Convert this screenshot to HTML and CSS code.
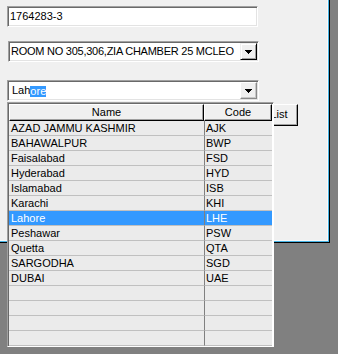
FILE: index.html
```
<!DOCTYPE html>
<html>
<head>
<meta charset="utf-8">
<link rel="stylesheet" href="styles.css">
</head>
<body>
<div class="window">
  <div class="textbox">1764283-3</div>
  <div class="combo combo-address">
    <span class="combo-text address-text">ROOM NO 305,306,ZIA CHAMBER 25 MCLEO</span>
    <span class="drop-btn"><svg width="7" height="4" viewBox="0 0 7 4" shape-rendering="crispEdges"><path d="M0 0h7v1h-1v1h-1v1h-1v1h-1v-1h-1v-1h-1v-1h-1z" fill="#000"/></svg></span>
  </div>
  <div class="combo combo-city">
    <span class="combo-text city-text">Lah<span class="sel">ore</span></span>
    <span class="drop-btn soft"><svg width="7" height="4" viewBox="0 0 7 4" shape-rendering="crispEdges"><path d="M0 0h7v1h-1v1h-1v1h-1v1h-1v-1h-1v-1h-1v-1h-1z" fill="#000"/></svg></span>
  </div>
  <div class="btn-list">List</div>
</div>

<div class="popup">
  <div class="head">
    <div class="hcell hname">Name</div>
    <div class="hcell hcode">Code</div>
  </div>
  <div class="row"><div class="cname">AZAD JAMMU KASHMIR</div><div class="ccode">AJK</div></div>
  <div class="row"><div class="cname">BAHAWALPUR</div><div class="ccode">BWP</div></div>
  <div class="row"><div class="cname">Faisalabad</div><div class="ccode">FSD</div></div>
  <div class="row"><div class="cname">Hyderabad</div><div class="ccode">HYD</div></div>
  <div class="row"><div class="cname">Islamabad</div><div class="ccode">ISB</div></div>
  <div class="row"><div class="cname">Karachi</div><div class="ccode">KHI</div></div>
  <div class="row selected"><div class="cname">Lahore</div><div class="ccode">LHE</div></div>
  <div class="row"><div class="cname">Peshawar</div><div class="ccode">PSW</div></div>
  <div class="row"><div class="cname">Quetta</div><div class="ccode">QTA</div></div>
  <div class="row"><div class="cname">SARGODHA</div><div class="ccode">SGD</div></div>
  <div class="row"><div class="cname">DUBAI</div><div class="ccode">UAE</div></div>
  <div class="row"><div class="cname"></div><div class="ccode"></div></div>
  <div class="row"><div class="cname"></div><div class="ccode"></div></div>
  <div class="row"><div class="cname"></div><div class="ccode"></div></div>
  <div class="row"><div class="cname"></div><div class="ccode"></div></div>
</div>
</body>
</html>
```
FILE: styles.css
```
* { box-sizing: border-box; }
html, body {
  margin: 0;
  padding: 0;
  background: #808080;
  font-family: "Liberation Sans", Arial, sans-serif;
  font-size: 11px;
  color: #000;
}
.window {
  width: 330px;
  height: 243px;
  background: #f0f0f0;
  border-right: 1px solid #000;
  border-bottom: 1px solid #000;
  box-shadow: inset -1px -1px 0 #46b4e6, inset -2px -2px 0 #fafafa;
  padding: 6px 0 0 7px;
  display: flex;
  flex-direction: column;
  align-items: flex-start;
}
.textbox, .combo {
  width: 251px;
  height: 21px;
  background: #fff;
  border-top: 1px solid #a0a0a0;
  border-left: 1px solid #a0a0a0;
  border-right: 1px solid #fff;
  border-bottom: 1px solid #fff;
  box-shadow: inset 1px 1px 0 #696969, inset -1px -1px 0 #e3e3e3;
}
.textbox {
  padding-left: 2px;
  line-height: 17px;
  padding-top: 1px;
}
.combo {
  display: flex;
  align-items: stretch;
  padding: 1px;
}
.combo-address {
  margin-top: 14px;
  margin-left: 1px;
}
.combo-city {
  margin-top: 18px;
  width: 252px;
}
.combo-text {
  flex: 1;
  padding-left: 1px;
  line-height: 17px;
  white-space: nowrap;
  overflow: hidden;
}
.address-text { letter-spacing: -0.25px; }
.city-text { padding-left: 3px; }
.sel {
  background: #3399ff;
  color: #fff;
  display: inline-block;
  line-height: 11px;
  height: 11px;
  vertical-align: -1px;
}
.drop-btn {
  flex: none;
  width: 17px;
  height: 17px;
  background: #f0f0f0;
  border-top: 1px solid #f0f0f0;
  border-left: 1px solid #f0f0f0;
  border-right: 1px solid #000;
  border-bottom: 1px solid #000;
  box-shadow: inset 1px 1px 0 #fff, inset -1px -1px 0 #a0a0a0;
  display: flex;
  align-items: center;
  justify-content: center;
  padding-top: 1px;
}
.drop-btn svg { display: block; }
.drop-btn.soft {
  border-top-color: #fff;
  border-left-color: #fff;
  border-right-color: #8a8a8a;
  border-bottom-color: #8a8a8a;
  box-shadow: inset -1px -1px 0 #c8c8c8;
}
.btn-list {
  margin-top: 3px;
  margin-left: 253px;
  width: 38px;
  height: 22px;
  background: #f0f0f0;
  border-top: 1px solid #fff;
  border-left: 1px solid #fff;
  border-right: 1px solid #000;
  border-bottom: 1px solid #000;
  box-shadow: inset -1px -1px 0 #a0a0a0;
  text-align: center;
  line-height: 19px;
}
.popup {
  position: absolute;
  left: 7px;
  top: 102px;
  width: 267px;
  height: 245px;
  background: #ebebeb;
  border-top: 1px solid #a0a0a0;
  border-left: 1px solid #a0a0a0;
  border-right: 1px solid #fff;
  border-bottom: 1px solid #fff;
  box-shadow: inset 1px 1px 0 #696969, inset -1px 0 0 #fff;
  padding: 1px 1px 0 1px;
}
.head {
  display: flex;
  height: 17px;
}
.hcell {
  height: 17px;
  background: #f0f0f0;
  border-top: 1px solid #fff;
  border-left: 1px solid #fff;
  border-right: 1px solid #000;
  border-bottom: 1px solid #000;
  box-shadow: inset -1px -1px 0 #a0a0a0;
  text-align: center;
  line-height: 14px;
}
.hname { width: 195px; }
.hcode { width: 68px; }
.row {
  display: flex;
  height: 15px;
}
.cname, .ccode {
  height: 15px;
  border-bottom: 1px solid #c0c0c0;
  line-height: 14px;
  white-space: nowrap;
  overflow: hidden;
}
.cname {
  width: 196px;
  padding-left: 2px;
  border-right: 1px solid #808080;
}
.ccode {
  width: 67px;
  padding-left: 1px;
}
.row.selected .cname, .row.selected .ccode {
  background: #3399ff;
  color: #fff;
}
```
